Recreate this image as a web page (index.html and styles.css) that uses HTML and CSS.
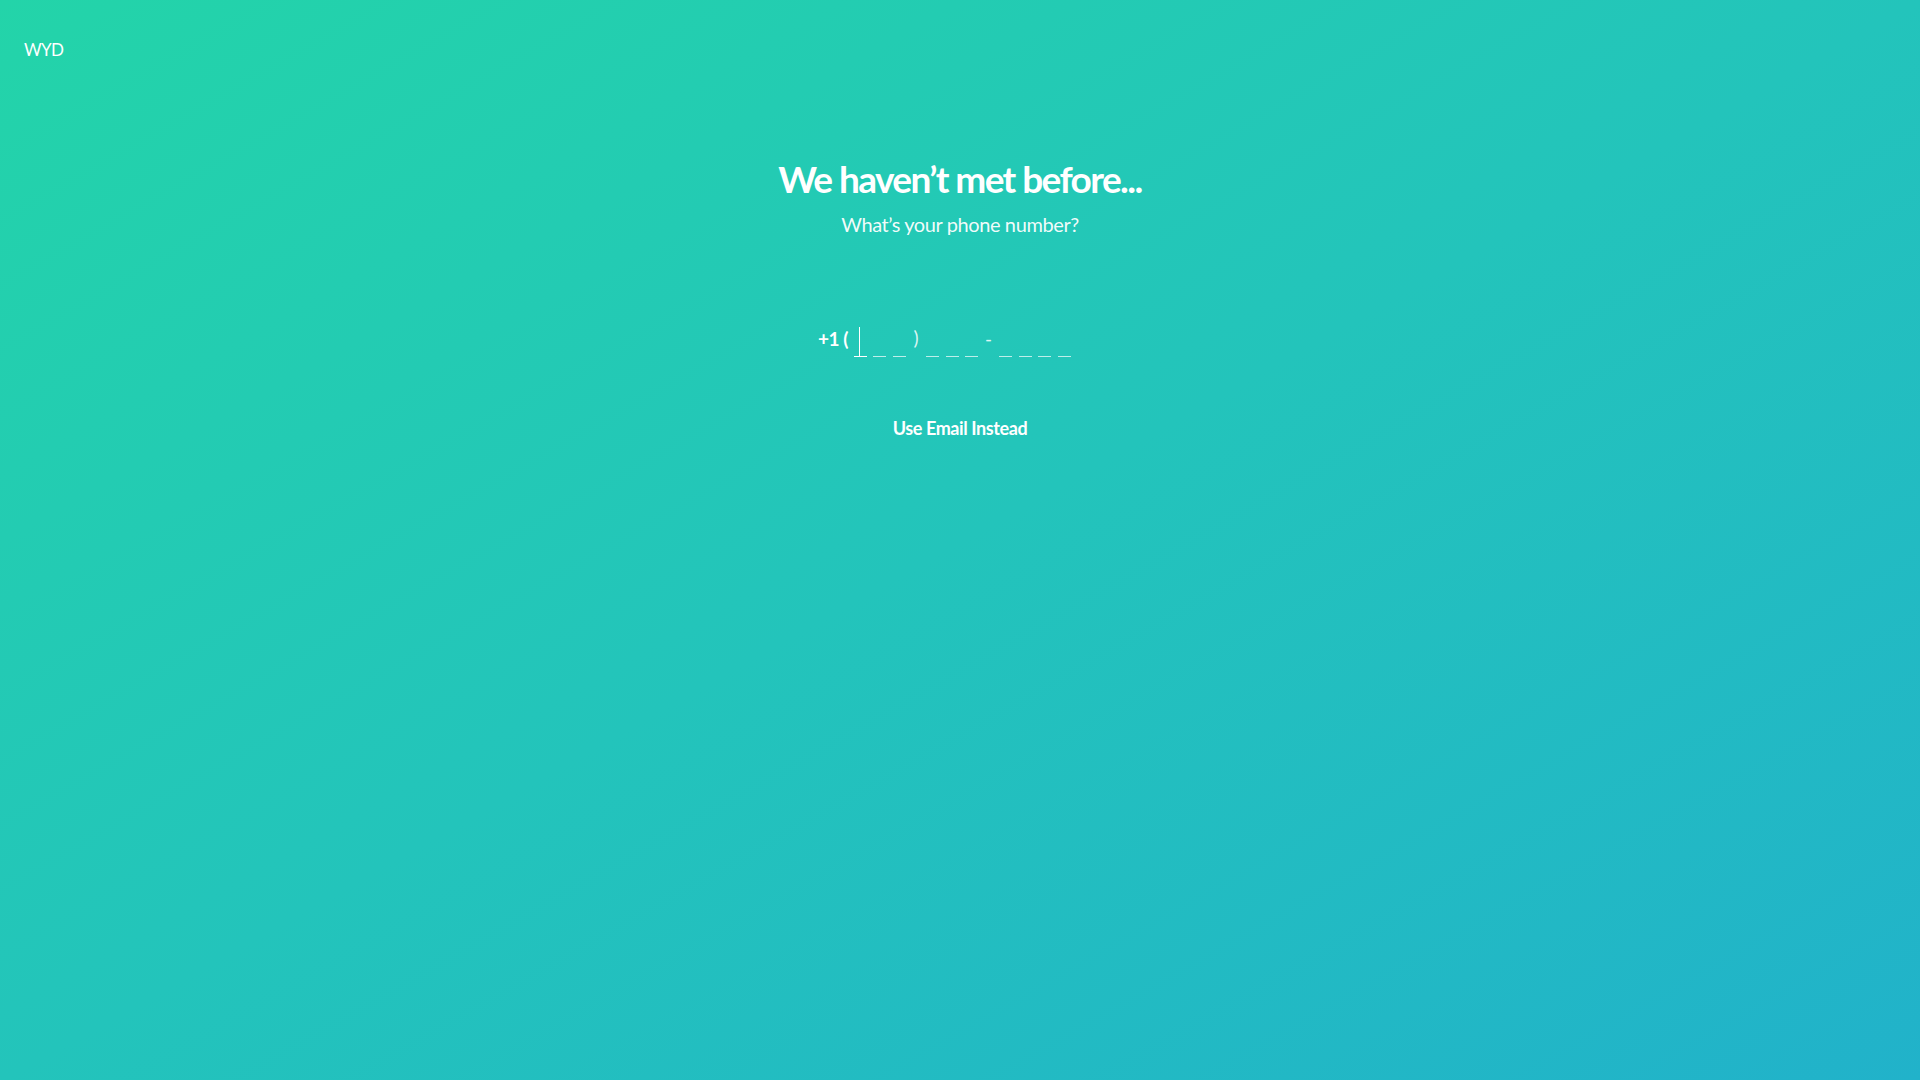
FILE: index.html
```html
<!DOCTYPE html>
<html lang="en">
<head>
<meta charset="utf-8">
<title>WYD</title>
<link rel="stylesheet" href="styles.css">
</head>
<body>
<div class="page">
  <header class="topbar">
    <div class="logo">WYD</div>
  </header>
  <main class="content">
    <h1 class="title">We haven’t met before...</h1>
    <p class="subtitle">What’s your phone number?</p>
    <div class="phone">
      <span class="prefix">+1 (</span>
      <span class="slot active"><span class="caret"></span></span>
      <span class="slot"></span>
      <span class="slot"></span>
      <span class="sep">)</span>
      <span class="slot"></span>
      <span class="slot"></span>
      <span class="slot"></span>
      <span class="sep dash">-</span>
      <span class="slot"></span>
      <span class="slot"></span>
      <span class="slot"></span>
      <span class="slot"></span>
    </div>
    <a class="alt-link" href="#">Use Email Instead</a>
  </main>
</div>
</body>
</html>
```

FILE: styles.css
```css
html, body {
  margin: 0;
  padding: 0;
  height: 100%;
}

body {
  font-family: "Lato", "Open Sans", sans-serif;
  color: #ffffff;
  background: linear-gradient(to bottom right, #23d4a9 0%, #23c4bb 50%, #21b2ca 100%);
}

.page {
  min-height: 100vh;
  display: flex;
  flex-direction: column;
}

.topbar {
  padding: 39px 24px 0;
}

.logo {
  font-size: 17px;
  line-height: 22px;
  font-weight: 400;
  letter-spacing: -0.6px;
}

.content {
  display: flex;
  flex-direction: column;
  align-items: center;
  padding-top: 96px;
}

.title {
  margin: 0;
  font-size: 37px;
  line-height: 44px;
  font-weight: 700;
  letter-spacing: -1.6px;
}

.subtitle {
  margin: 11px 0 0;
  font-size: 20px;
  line-height: 24px;
  font-weight: 400;
  letter-spacing: -0.4px;
  color: rgba(255, 255, 255, 0.95);
}

.phone {
  margin-top: 89px;
  width: 284px;
  display: flex;
  align-items: flex-end;
  height: 32px;
  font-size: 19px;
  line-height: 22px;
}

.prefix {
  font-weight: 700;
  letter-spacing: -0.5px;
  margin-right: 6px;
  padding-bottom: 7px;
  white-space: pre;
}

.slot {
  position: relative;
  width: 13px;
  height: 30px;
  border-bottom: 1.5px solid rgba(255, 255, 255, 0.7);
  margin-right: 6.5px;
  box-sizing: border-box;
}

.slot.active {
  border-bottom-color: #ffffff;
}

.caret {
  position: absolute;
  left: 5px;
  top: 0;
  width: 1px;
  height: 30px;
  background: #ffffff;
}

.sep {
  color: rgba(255, 255, 255, 0.85);
  padding-bottom: 8px;
  margin: 0 8px 0 1px;
}

.sep.dash {
  margin: 0 7px 0 0;
  padding-bottom: 7px;
}

.alt-link {
  margin-top: 61px;
  font-size: 18px;
  line-height: 20px;
  font-weight: 700;
  letter-spacing: -0.4px;
  color: #ffffff;
  text-decoration: none;
}
```
